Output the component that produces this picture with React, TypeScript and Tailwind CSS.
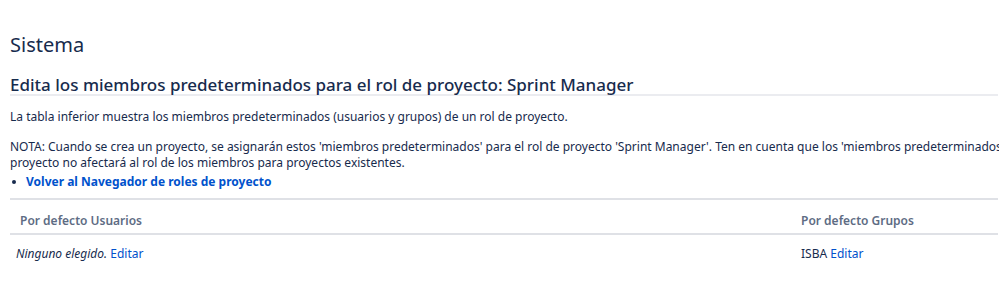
export default function App() {
  return (
    <div className="h-[298px] w-[999px] overflow-hidden bg-white font-['Noto_Sans',sans-serif] text-[#172b4d]">
      <div className="pl-[10px] pr-[1px]">
        <h1 className="pt-[31px] text-[20px] leading-[28px] font-normal">Sistema</h1>
        <h2 className="mt-[17px] border-b-2 border-[#ebecf0] text-[17px] leading-[18px] font-medium">
          Edita los miembros predeterminados para el rol de proyecto: Sprint Manager
        </h2>
        <p className="mt-[13px] text-[12px] leading-[16px]">
          La tabla inferior muestra los miembros predeterminados (usuarios y grupos) de un rol de proyecto.
        </p>
        <p className="mt-[14px] whitespace-nowrap text-[12px] leading-[16px]">
          NOTA: Cuando se crea un proyecto, se asignarán estos 'miembros predeterminados' para el rol de proyecto 'Sprint Manager'. Ten en cuenta que los 'miembros predeterminados' para el rol de
          <br />
          proyecto no afectará al rol de los miembros para proyectos existentes.
        </p>
        <ul className="mt-[3px] text-[12px] leading-[16px]">
          <li className="flex items-center">
            <span className="ml-[2px] mr-[10px] h-[4px] w-[4px] rounded-full bg-[#172b4d]" />
            <a href="#" className="font-bold text-[#0052cc]">Volver al Navegador de roles de proyecto</a>
          </li>
        </ul>
        <table className="mt-[8px] w-full border-collapse text-[12px] leading-[16px]">
          <thead>
            <tr className="border-t-2 border-b-2 border-[#dfe1e6]">
              <th className="pl-[10px] pt-[13px] pb-[4px] text-left font-semibold text-[#5e6c84]">Por defecto Usuarios</th>
              <th className="w-[197px] pt-[13px] pb-[4px] text-left font-semibold text-[#5e6c84]">Por defecto Grupos</th>
            </tr>
          </thead>
          <tbody>
            <tr>
              <td className="pl-[6px] pt-[11px] pb-[10px]">
                <em>Ninguno elegido.</em> <a href="#" className="text-[#0052cc]">Editar</a>
              </td>
              <td className="pt-[11px] pb-[10px]">
                ISBA <a href="#" className="text-[#0052cc]">Editar</a>
              </td>
            </tr>
          </tbody>
        </table>
      </div>
    </div>
  )
}
